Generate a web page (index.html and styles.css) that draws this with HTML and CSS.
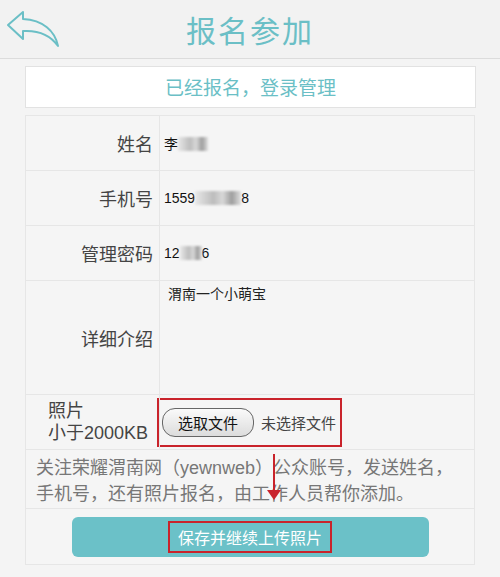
FILE: index.html
```html
<!DOCTYPE html>
<html lang="zh-CN">
<head>
  <meta charset="UTF-8" />
  <meta name="viewport" content="width=device-width, initial-scale=1.0" />
  <title>报名参加</title>
  <link rel="stylesheet" href="styles.css">
</head>
<body>
  <header class="topbar">
    <a class="back" href="#">
      <svg width="56" height="40" viewBox="0 0 56 40">
        <path d="M17 2 L2 15 L17 29 L17 21 C33 20 45 26 52 36 C49 21 37 10 17 9 Z" fill="none" stroke="#6bbfc6" stroke-width="2" stroke-linejoin="round"/>
      </svg>
    </a>
    <h1>报名参加</h1>
  </header>

  <div class="main">
    <a class="login-link" href="#">已经报名，登录管理</a>

    <table class="form">
      <colgroup>
        <col class="col-label">
        <col>
      </colgroup>
      <tr class="row">
        <th>姓名</th>
        <td>李<span class="blur w40"></span></td>
      </tr>
      <tr class="row">
        <th>手机号</th>
        <td>1559<span class="blur w45"></span>8</td>
      </tr>
      <tr class="row">
        <th>管理密码</th>
        <td>12<span class="blur w20"></span>6</td>
      </tr>
      <tr class="row tall">
        <th>详细介绍</th>
        <td class="intro"><div class="textarea">渭南一个小萌宝</div></td>
      </tr>
      <tr class="row photo">
        <th class="left">照片<br>小于2000KB</th>
        <td>
          <div class="file mark">
            <span class="file-btn">选取文件</span>
            <span class="file-none">未选择文件</span>
          </div>
        </td>
      </tr>
      <tr>
        <td colspan="2" class="note">
          关注荣耀渭南网（<span class="latin">yewnweb</span>）公众账号，发送姓名，手机号，还有照片报名，由工作人员帮你添加。
          <span class="pointer"></span>
        </td>
      </tr>
      <tr>
        <td colspan="2" class="submit-cell">
          <button class="submit"><span class="mark">保存并继续上传照片</span></button>
        </td>
      </tr>
    </table>
  </div>
</body>
</html>
```

FILE: styles.css
```css
body {
  margin: 0;
  font-family: "Noto Sans CJK SC", "Liberation Sans", sans-serif;
  background: #f4f4f4;
  color: #333;
}
.topbar {
  position: relative;
  height: 58px;
  background: #f2f2f2;
  border-bottom: 1px solid #dcdcdc;
  display: flex;
  align-items: center;
  justify-content: center;
}
.back {
  position: absolute;
  left: 6px;
  top: 10px;
}
.topbar h1 {
  margin: 0;
  font-size: 30px;
  font-weight: normal;
  color: #6bbfc6;
  letter-spacing: 2px;
}
.main {
  padding: 7px 24px 0 25px;
}
.login-link {
  display: block;
  height: 40px;
  line-height: 40px;
  background: #fff;
  border: 1px solid #e2e2e2;
  text-align: center;
  color: #6bbfc6;
  font-size: 19px;
  text-decoration: none;
}
.form {
  margin-top: 7px;
  width: 450px;
  table-layout: fixed;
  border-collapse: collapse;
  background: #f5f5f5;
  border: 1px solid #e6e6e6;
}
.col-label {
  width: 134px;
}
.form th, .form td {
  border: 1px solid #e6e6e6;
  padding: 0;
}
.row {
  height: 55px;
}
.row th {
  text-align: right;
  padding-right: 6px;
  font-weight: normal;
  font-size: 18px;
  color: #444;
}
.row td {
  padding-left: 4px;
  font-size: 14px;
  color: #111;
  font-family: "Liberation Sans", "Noto Sans CJK SC", sans-serif;
}
.blur {
  display: inline-block;
  height: 14px;
  vertical-align: -2px;
  background: linear-gradient(90deg, #e8e8e8, #bdbdbd 40%, #d8d8d8 60%, #9e9e9e 80%, #e0e0e0);
  filter: blur(1px);
}
.w40 { width: 30px; }
.w45 { width: 46px; }
.w20 { width: 22px; }
.tall {
  height: 114px;
}
.intro {
  vertical-align: top;
}
.textarea {
  padding: 2px 4px;
  font-family: "Noto Sans CJK SC", sans-serif;
  font-size: 14px;
  color: #222;
}
.photo th.left {
  text-align: left;
  padding-left: 22px;
  padding-right: 0;
  line-height: 22px;
  font-size: 18px;
  font-family: "Liberation Sans", "Noto Sans CJK SC", sans-serif;
}
.photo td {
  padding-left: 0;
}
.file {
  display: flex;
  align-items: center;
  gap: 7px;
  width: 178px;
  height: 45px;
  padding-left: 3px;
  margin-left: -3px;
}
.mark {
  border: 2px solid #c9232b;
}
.file-btn {
  display: inline-block;
  padding: 3px 15px;
  border: 1px solid #666;
  border-radius: 13px;
  background: linear-gradient(#fafafa, #dcdcdc);
  font-family: "Noto Sans CJK SC", sans-serif;
  font-size: 15px;
  color: #111;
}
.file-none {
  font-family: "Noto Sans CJK SC", sans-serif;
  font-size: 15px;
  color: #444;
}
.note {
  position: relative;
  height: 58px;
  padding: 0 10px !important;
  font-size: 18px;
  line-height: 24px;
  color: #777;
}
.latin {
  font-family: "Liberation Sans", sans-serif;
}
.pointer {
  position: absolute;
  left: 247px;
  top: 4px;
  width: 2px;
  height: 38px;
  background: #c9232b;
}
.pointer::after {
  content: "";
  position: absolute;
  left: -6px;
  bottom: -8px;
  border-left: 7px solid transparent;
  border-right: 7px solid transparent;
  border-top: 10px solid #c9232b;
}
.submit-cell {
  height: 55px;
  text-align: center;
}
.submit {
  width: 357px;
  height: 40px;
  border: none;
  border-radius: 6px;
  background: #6bc1c8;
  color: #fff;
  font-family: "Noto Sans CJK SC", sans-serif;
  font-size: 16px;
  padding: 0;
  display: inline-flex;
  align-items: center;
  justify-content: center;
}
.submit .mark {
  padding: 2px 8px;
  line-height: 24px;
}
```
